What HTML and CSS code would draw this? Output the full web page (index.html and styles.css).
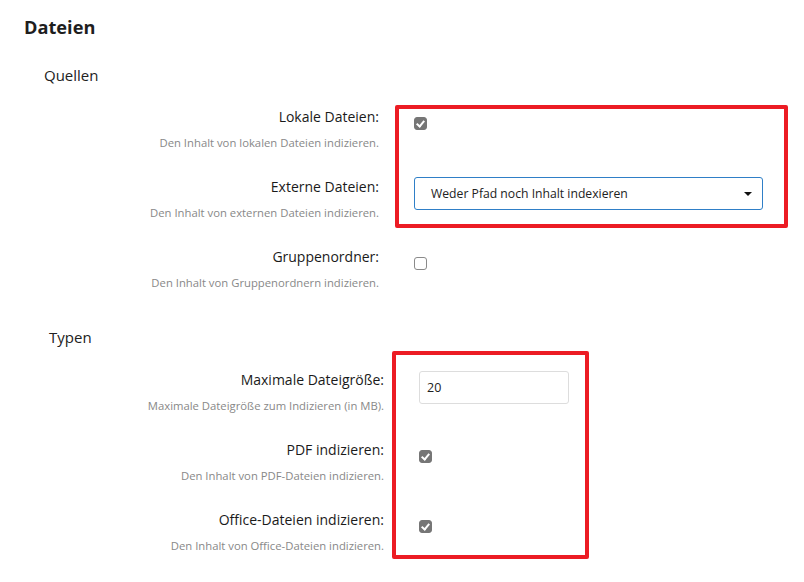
FILE: index.html
```html
<!DOCTYPE html>
<html lang="de">
<head>
    <meta charset="UTF-8">
    <title>Dateien</title>
    <link rel="stylesheet" href="styles.css">
</head>
<body>
<div class="page">
    <h2 class="section-title">Dateien</h2>

    <!-- Quellen -->
    <div class="group">
        <h3 class="group-title">Quellen</h3>

        <div class="row">
            <div class="row-label">
                <label for="localFiles">Lokale Dateien:</label>
                <p class="hint">Den Inhalt von lokalen Dateien indizieren.</p>
            </div>
            <div class="row-control">
                <span class="check checked" id="localFiles"></span>
            </div>
        </div>

        <div class="row">
            <div class="row-label">
                <label for="externalFiles">Externe Dateien:</label>
                <p class="hint">Den Inhalt von externen Dateien indizieren.</p>
            </div>
            <div class="row-control">
                <div class="select" id="externalFiles">
                    <span>Weder Pfad noch Inhalt indexieren</span>
                    <span class="caret"></span>
                </div>
            </div>
        </div>

        <div class="row">
            <div class="row-label">
                <label for="groupFolders">Gruppenordner:</label>
                <p class="hint">Den Inhalt von Gruppenordnern indizieren.</p>
            </div>
            <div class="row-control">
                <span class="check" id="groupFolders"></span>
            </div>
        </div>

        <div class="highlight highlight-sources"></div>
    </div>

    <!-- Typen -->
    <div class="group group-types">
        <h3 class="group-title">Typen</h3>

        <div class="row">
            <div class="row-label">
                <label for="maxSize">Maximale Dateigröße:</label>
                <p class="hint">Maximale Dateigröße zum Indizieren (in MB).</p>
            </div>
            <div class="row-control">
                <input id="maxSize" class="text-input" type="text" value="20">
            </div>
        </div>

        <div class="row">
            <div class="row-label">
                <label for="pdfIndex">PDF indizieren:</label>
                <p class="hint">Den Inhalt von PDF-Dateien indizieren.</p>
            </div>
            <div class="row-control">
                <span class="check checked" id="pdfIndex"></span>
            </div>
        </div>

        <div class="row">
            <div class="row-label">
                <label for="officeIndex">Office-Dateien indizieren:</label>
                <p class="hint">Den Inhalt von Office-Dateien indizieren.</p>
            </div>
            <div class="row-control">
                <span class="check checked" id="officeIndex"></span>
            </div>
        </div>

        <div class="highlight highlight-types"></div>
    </div>
</div>
</body>
</html>
```

FILE: styles.css
```css
body {
    margin: 0;
    font-family: "Open Sans", "Noto Sans", sans-serif;
    color: #222;
    background: #fff;
}
.page {
    padding: 14px 24px 0 24px;
}
.section-title {
    margin: 0;
    font-size: 18.2px;
    line-height: 26px;
    font-weight: bold;
    color: #1e1e1e;
}
.group {
    position: relative;
    padding-left: 20px;
}
.group-title {
    margin: 24px 0 19px 0;
    font-size: 15px;
    line-height: 22px;
    font-weight: normal;
}
.group-types {
    padding-left: 25px;
}
.group-types .group-title {
    margin-top: 11px;
    margin-bottom: 20px;
}
.row {
    display: grid;
    grid-template-columns: 335px 1fr;
    column-gap: 35px;
    height: 70px;
}
.row-label {
    padding-top: 2px;
    text-align: right;
}
.row-label label {
    display: block;
    font-size: 14px;
    line-height: 20px;
    color: #1a1a1a;
}
.hint {
    margin: 8px 0 0 0;
    font-size: 11.3px;
    line-height: 16px;
    color: #888;
}
.row-control {
    padding-top: 12px;
}
.check {
    display: block;
    width: 13px;
    height: 13px;
    box-sizing: border-box;
    border: 1px solid #8a8a8a;
    border-radius: 3px;
    background: #fff;
    position: relative;
}
.check.checked {
    background: #767676;
    border-color: #767676;
}
.check.checked::after {
    content: "";
    position: absolute;
    left: 3px;
    top: 1px;
    width: 3px;
    height: 6px;
    border: solid #fff;
    border-width: 0 2px 2px 0;
    transform: rotate(40deg);
}
.select {
    display: flex;
    align-items: center;
    justify-content: space-between;
    width: 349px;
    height: 33px;
    margin-top: -10px;
    box-sizing: border-box;
    padding: 0 10px 0 16px;
    border: 1px solid #2f7fc7;
    border-radius: 3px;
    font-size: 12.2px;
    color: #222;
}
.caret {
    width: 0;
    height: 0;
    border-left: 4px solid transparent;
    border-right: 4px solid transparent;
    border-top: 4px solid #111;
}
.text-input {
    display: block;
    width: 150px;
    height: 33px;
    margin-top: -9px;
    box-sizing: border-box;
    padding: 0 7px;
    border: 1px solid #ddd;
    border-radius: 3px;
    font-family: inherit;
    font-size: 12.5px;
    color: #222;
}
/* red annotation boxes drawn over the screenshot */
.highlight {
    position: absolute;
    border: 4px solid #ec1c24;
    border-radius: 2px;
    box-sizing: border-box;
}
.highlight-sources {
    left: 371px;
    top: 41px;
    width: 393px;
    height: 123px;
}
.highlight-types {
    left: 368px;
    top: 25px;
    width: 197px;
    height: 208px;
}
```
